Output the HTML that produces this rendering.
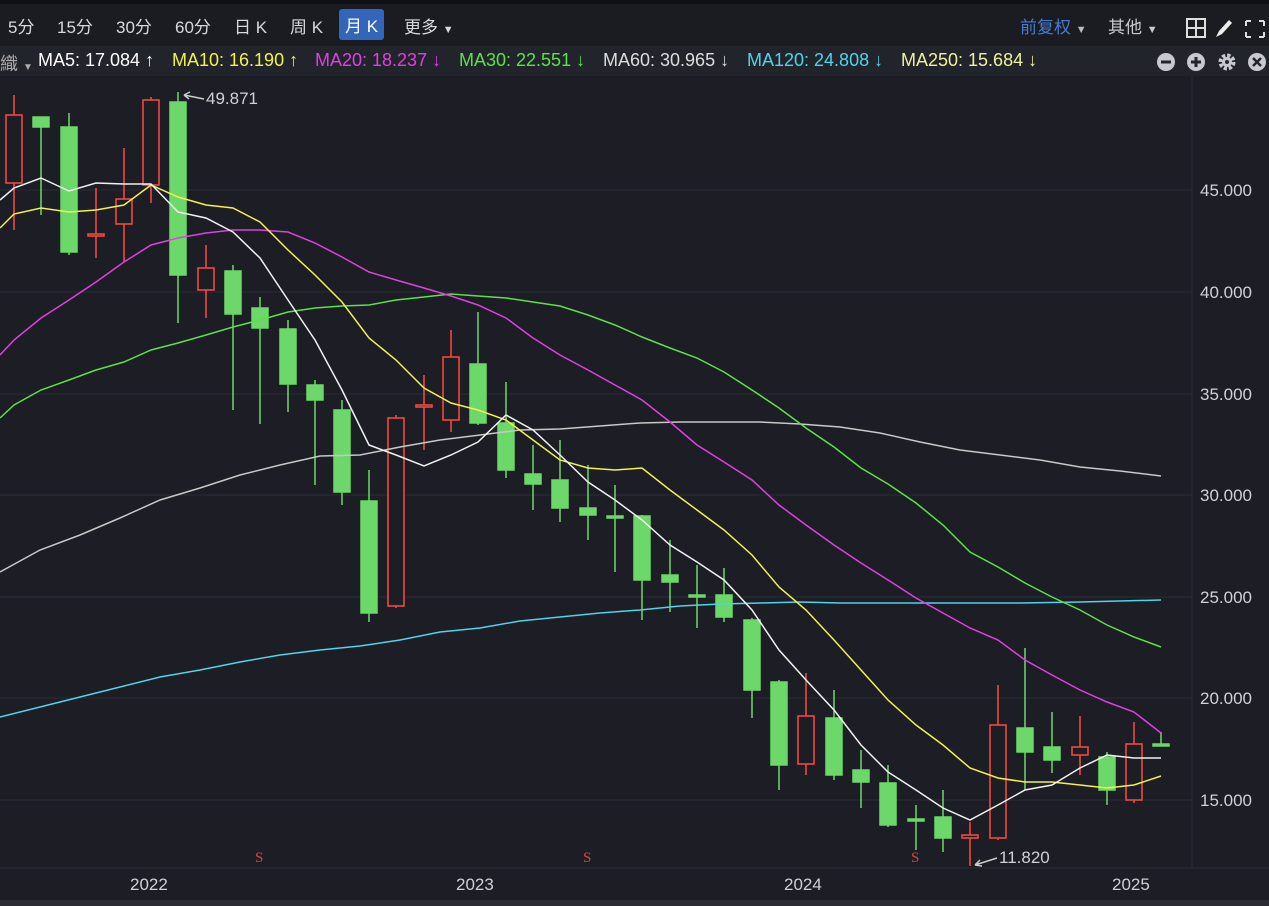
<!DOCTYPE html>
<html><head><meta charset="utf-8"><style>
body{margin:0;width:1269px;height:906px;background:#1c1d25;overflow:hidden;font-family:"Liberation Sans","Noto Sans CJK SC",sans-serif}
.top{position:absolute;left:0;top:0;width:1269px;height:46px;background:#1b1c22;border-top:4px solid #0f1014;box-sizing:border-box}
.top span{position:absolute;top:9px;font-size:17px;color:#d8d9de}
.leg{position:absolute;left:0;top:46px;width:1269px;height:30px;background:#22242c;font-size:18px;white-space:nowrap}
.leg span{position:absolute;top:4px}
</style></head><body>
<div class="top">
<span style="left:8px">5分</span><span style="left:57px">15分</span><span style="left:116px">30分</span><span style="left:175px">60分</span><span style="left:234px">日 K</span><span style="left:290px">周 K</span>
<span style="left:339px;top:5px;background:#3366bb;color:#fff;padding:3px 6px;border-radius:3px">月 K</span>
<span style="left:404px">更多 <small style="font-size:11px">▼</small></span>
<span style="left:1020px;color:#4a78d0">前复权 <small style="font-size:11px;color:#bbb">▼</small></span>
<span style="left:1108px;color:#c8c9cf">其他 <small style="font-size:11px">▼</small></span>
<svg style="position:absolute;left:1186px;top:13px" width="80" height="22">
<rect x="1" y="2" width="18" height="18" fill="none" stroke="#ddd" stroke-width="2"/><line x1="10" y1="2" x2="10" y2="20" stroke="#ddd" stroke-width="2"/><line x1="1" y1="11" x2="19" y2="11" stroke="#ddd" stroke-width="2"/>
<path d="M30 20 L33 14 L43 3 L46 6 L36 17 Z" fill="#eee"/>
<path d="M60 4h5M60 4v5M78 4h-5M78 4v5M60 20h5M60 20v-5M78 20h-5M78 20v-5" stroke="#ddd" stroke-width="2"/>
</svg>
</div>
<div class="leg">
<span style="left:0;color:#aaa">織 <small style="font-size:10px">▼</small></span>
<span style="left:38px;color:#fff">MA5: 17.084 ↑</span>
<span style="left:172px;color:#f2f24a">MA10: 16.190 ↑</span>
<span style="left:315px;color:#e040e0">MA20: 18.237 ↓</span>
<span style="left:459px;color:#5ee04a">MA30: 22.551 ↓</span>
<span style="left:603px;color:#ddd">MA60: 30.965 ↓</span>
<span style="left:747px;color:#4fd4e8">MA120: 24.808 ↓</span>
<span style="left:901px;color:#f0f0a0">MA250: 15.684 ↓</span>
<svg style="position:absolute;left:1155px;top:5px" width="114" height="22">
<circle cx="11" cy="11" r="9" fill="#c8c9d0"/><rect x="6" y="9.5" width="10" height="3" fill="#22242c"/>
<circle cx="41" cy="11" r="9" fill="#c8c9d0"/><rect x="36" y="9.5" width="10" height="3" fill="#22242c"/><rect x="39.5" y="6" width="3" height="10" fill="#22242c"/>
<circle cx="72" cy="11" r="6" fill="none" stroke="#c8c9d0" stroke-width="5" stroke-dasharray="3 1.7"/><circle cx="72" cy="11" r="5" fill="#c8c9d0"/><circle cx="72" cy="11" r="2" fill="#22242c"/>
<circle cx="102" cy="11" r="9" fill="#c8c9d0"/><path d="M98 7l8 8M106 7l-8 8" stroke="#22242c" stroke-width="2.5"/>
</svg>
</div>
<svg style="position:absolute;left:0;top:76px" width="1269" height="830">
<g transform="translate(0,-76)">
<g stroke="#2a2c35" stroke-width="1">
<line x1="0" y1="190" x2="1192" y2="190"/><line x1="0" y1="292" x2="1192" y2="292"/><line x1="0" y1="394" x2="1192" y2="394"/><line x1="0" y1="495" x2="1192" y2="495"/><line x1="0" y1="597" x2="1192" y2="597"/><line x1="0" y1="698" x2="1192" y2="698"/><line x1="0" y1="800" x2="1192" y2="800"/>
<line x1="1192" y1="76" x2="1192" y2="868"/><line x1="0" y1="868" x2="1269" y2="868"/>
</g>
<rect x="0" y="900" width="1269" height="6" fill="#2a2c34"/>
<g fill="#d0d1d6" font-size="17">
<text x="1200" y="196">45.000</text><text x="1200" y="298">40.000</text><text x="1200" y="400">35.000</text><text x="1200" y="501">30.000</text><text x="1200" y="603">25.000</text><text x="1200" y="704">20.000</text><text x="1200" y="806">15.000</text>
<text x="130" y="890">2022</text><text x="456" y="890">2023</text><text x="784" y="890">2024</text><text x="1112" y="890">2025</text>
<text x="206" y="104">49.871</text><text x="999" y="863">11.820</text>
</g>
<path d="M204 99 L184 95 M184 95 l6 -3 M184 95 l5 4" stroke="#ccc" stroke-width="1.5" fill="none"/>
<path d="M997 858 L975 865 M975 865 l5 -5 M975 865 l7 1" stroke="#ccc" stroke-width="1.5" fill="none"/>
<g fill="#d9453c" font-size="15" font-family="Liberation Serif,serif"><text x="255" y="862">S</text><text x="583" y="862">S</text><text x="911" y="862">S</text></g>
<g stroke="#6cd86a" stroke-width="1.5" fill="#6cd86a">
<line x1="41" y1="117" x2="41" y2="215"/><rect x="33" y="117" width="16" height="10"/>
<line x1="69" y1="113" x2="69" y2="255"/><rect x="61" y="127" width="16" height="125"/>
<line x1="178" y1="92" x2="178" y2="323"/><rect x="170" y="102" width="16" height="173"/>
<line x1="233" y1="265" x2="233" y2="410"/><rect x="225" y="271" width="16" height="43"/>
<line x1="260" y1="297" x2="260" y2="424"/><rect x="252" y="308" width="16" height="20"/>
<line x1="288" y1="320" x2="288" y2="412"/><rect x="280" y="329" width="16" height="55"/>
<line x1="315" y1="380" x2="315" y2="485"/><rect x="307" y="385" width="16" height="15"/>
<line x1="342" y1="400" x2="342" y2="505"/><rect x="334" y="410" width="16" height="82"/>
<line x1="369" y1="470" x2="369" y2="622"/><rect x="361" y="501" width="16" height="112"/>
<line x1="478" y1="312" x2="478" y2="425"/><rect x="470" y="364" width="16" height="59"/>
<line x1="506" y1="382" x2="506" y2="478"/><rect x="498" y="423" width="16" height="47"/>
<line x1="533" y1="445" x2="533" y2="510"/><rect x="525" y="474" width="16" height="10"/>
<line x1="560" y1="440" x2="560" y2="522"/><rect x="552" y="480" width="16" height="28"/>
<line x1="588" y1="465" x2="588" y2="540"/><rect x="580" y="508" width="16" height="7"/>
<line x1="615" y1="485" x2="615" y2="572"/><rect x="607" y="516" width="16" height="2"/>
<line x1="642" y1="515" x2="642" y2="620"/><rect x="634" y="516" width="16" height="64"/>
<line x1="670" y1="540" x2="670" y2="612"/><rect x="662" y="575" width="16" height="7"/>
<line x1="697" y1="565" x2="697" y2="628"/><rect x="689" y="595" width="16" height="2"/>
<line x1="724" y1="568" x2="724" y2="622"/><rect x="716" y="595" width="16" height="22"/>
<line x1="752" y1="618" x2="752" y2="718"/><rect x="744" y="620" width="16" height="70"/>
<line x1="779" y1="680" x2="779" y2="790"/><rect x="771" y="682" width="16" height="83"/>
<line x1="834" y1="690" x2="834" y2="780"/><rect x="826" y="718" width="16" height="57"/>
<line x1="861" y1="750" x2="861" y2="808"/><rect x="853" y="770" width="16" height="12"/>
<line x1="888" y1="765" x2="888" y2="827"/><rect x="880" y="783" width="16" height="42"/>
<line x1="916" y1="805" x2="916" y2="850"/><rect x="908" y="819" width="16" height="2"/>
<line x1="943" y1="790" x2="943" y2="852"/><rect x="935" y="817" width="16" height="21"/>
<line x1="1025" y1="648" x2="1025" y2="790"/><rect x="1017" y="728" width="16" height="24"/>
<line x1="1052" y1="712" x2="1052" y2="773"/><rect x="1044" y="747" width="16" height="13"/>
<line x1="1107" y1="752" x2="1107" y2="805"/><rect x="1099" y="757" width="16" height="33"/>
<line x1="1161" y1="732" x2="1161" y2="746"/><rect x="1153" y="744" width="16" height="2"/>
</g>
<g stroke="#ee4a3e" stroke-width="1.6" fill="#1c1d25">
<line x1="14" y1="95" x2="14" y2="230"/><rect x="6" y="115" width="16" height="68"/>
<line x1="96" y1="188" x2="96" y2="258"/><rect x="88" y="234" width="16" height="2"/>
<line x1="124" y1="148" x2="124" y2="262"/><rect x="116" y="199" width="16" height="25"/>
<line x1="151" y1="97" x2="151" y2="203"/><rect x="143" y="100" width="16" height="85"/>
<line x1="206" y1="245" x2="206" y2="318"/><rect x="198" y="268" width="16" height="22"/>
<line x1="396" y1="415" x2="396" y2="608"/><rect x="388" y="418" width="16" height="188"/>
<line x1="424" y1="375" x2="424" y2="450"/><rect x="416" y="405" width="16" height="2"/>
<line x1="451" y1="330" x2="451" y2="432"/><rect x="443" y="357" width="16" height="63"/>
<line x1="806" y1="673" x2="806" y2="775"/><rect x="798" y="716" width="16" height="48"/>
<line x1="970" y1="822" x2="970" y2="866"/><rect x="962" y="835" width="16" height="3"/>
<line x1="998" y1="685" x2="998" y2="840"/><rect x="990" y="725" width="16" height="113"/>
<line x1="1080" y1="716" x2="1080" y2="775"/><rect x="1072" y="747" width="16" height="8"/>
<line x1="1134" y1="722" x2="1134" y2="803"/><rect x="1126" y="744" width="16" height="56"/>
</g>
<g fill="none" stroke-width="1.5">
<polyline stroke="#4fd4e8" points="0,717 40,707 80,697 120,687 160,677 200,670 240,662 280,655 320,650 360,646 400,640 440,632 480,628 520,621 560,617 600,613 640,610 680,606 720,604 760,603 800,602 840,603 900,603 960,603 1020,603 1080,602 1161,600"/>
<polyline stroke="#c8c8c8" points="0,572 40,550 80,535 120,518 160,500 200,488 240,475 280,465 320,456 360,455 400,447 440,440 480,435 520,430 560,429 600,426 640,423 680,422 720,422 760,422 800,424 840,427 880,433 920,442 960,450 1000,455 1040,460 1080,467 1120,471 1161,476"/>
<polyline stroke="#5ee04a" points="0,418 14,405 41,390 69,380 96,370 124,362 151,350 178,343 206,335 233,327 260,320 288,312 315,308 342,306 369,305 396,300 424,297 451,294 478,296 506,298 533,302 560,306 588,315 615,325 642,337 670,348 697,358 724,372 752,390 779,408 806,428 834,447 861,468 888,484 916,503 943,525 970,552 998,567 1025,583 1052,597 1080,610 1107,625 1134,637 1161,647"/>
<polyline stroke="#e040e0" points="0,355 14,340 41,318 69,300 96,282 124,262 151,245 178,238 206,233 233,230 260,230 288,232 315,243 342,257 369,272 396,280 424,288 451,296 478,305 506,318 533,338 560,355 588,370 615,385 642,400 670,422 697,445 724,462 752,480 779,505 806,525 834,545 861,563 888,580 916,598 943,613 970,628 998,640 1025,660 1052,675 1080,690 1107,702 1134,712 1161,733"/>
<polyline stroke="#f2f24a" points="0,228 14,214 41,208 69,212 96,210 124,205 151,185 178,197 206,205 233,208 260,222 288,250 315,275 342,302 369,338 396,360 424,388 451,403 478,410 506,420 533,440 560,460 588,468 615,470 642,468 670,490 697,510 724,530 752,555 779,587 806,610 834,640 861,670 888,700 916,725 943,745 970,768 998,778 1025,782 1052,782 1080,785 1107,788 1134,785 1161,776"/>
<polyline stroke="#f2f2f2" points="0,200 14,188 41,178 69,191 96,183 124,184 151,184 178,212 206,218 233,232 260,258 288,300 315,340 342,390 369,445 396,455 424,466 451,455 478,442 506,415 533,430 560,455 588,482 615,500 642,520 670,545 697,562 724,580 752,610 779,650 806,680 834,710 861,745 888,772 916,790 943,808 970,820 998,805 1025,790 1052,785 1080,768 1107,755 1134,758 1161,758"/>
</g>
</g>
</svg>
</body></html>
